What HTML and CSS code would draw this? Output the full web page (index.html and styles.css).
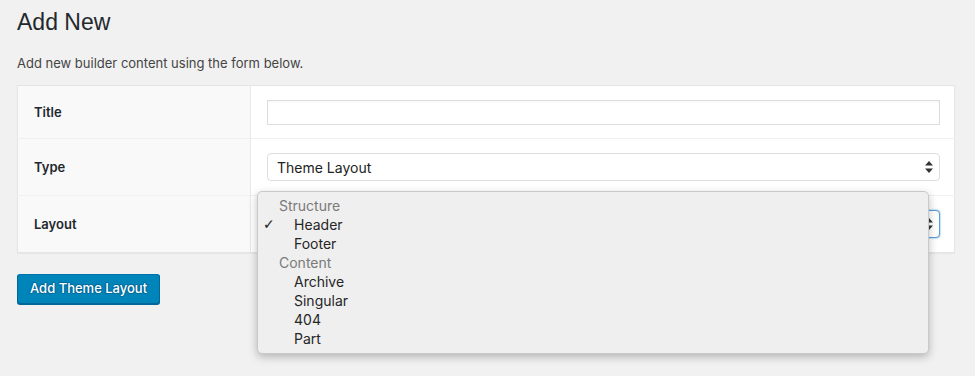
FILE: index.html
```html
<!DOCTYPE html>
<html>
<head>
<meta charset="utf-8">
<link rel="stylesheet" href="styles.css">
</head>
<body>
<div class="wrap">
  <h1 class="title">Add New</h1>
  <p class="desc">Add new builder content using the form below.</p>
  <table class="form-table">
    <tr class="row row-first">
      <th>Title</th>
      <td><div class="input"></div></td>
    </tr>
    <tr class="row">
      <th>Type</th>
      <td>
        <div class="select">
          <span>Theme Layout</span>
          <svg class="arrows" width="8" height="12" viewBox="0 0 8 12"><path d="M4 0 L8 4.5 L0 4.5 Z M0 7.5 L8 7.5 L4 12 Z" fill="#333"/></svg>
        </div>
      </td>
    </tr>
    <tr class="row">
      <th>Layout</th>
      <td>
        <div class="select-holder">
          <div class="select focus">
            <span></span>
            <svg class="arrows" width="8" height="12" viewBox="0 0 8 12"><path d="M4 0 L8 4.5 L0 4.5 Z M0 7.5 L8 7.5 L4 12 Z" fill="#333"/></svg>
          </div>
          <div class="popup">
            <div class="group">Structure</div>
            <div class="opt"><span class="check">✓</span><span>Header</span></div>
            <div class="opt"><span class="check"></span><span>Footer</span></div>
            <div class="group">Content</div>
            <div class="opt"><span class="check"></span><span>Archive</span></div>
            <div class="opt"><span class="check"></span><span>Singular</span></div>
            <div class="opt"><span class="check"></span><span>404</span></div>
            <div class="opt"><span class="check"></span><span>Part</span></div>
          </div>
        </div>
      </td>
    </tr>
  </table>
  <div class="actions">
    <button class="button-primary">Add Theme Layout</button>
  </div>
</div>
</body>
</html>
```

FILE: styles.css
```css
html, body {
  margin: 0;
  padding: 0;
  background: #f1f1f1;
  font-family: Inter, "Liberation Sans", Arial, sans-serif;
  color: #444;
}

body {
  min-height: 100vh;
}

.wrap {
  padding: 0 20px 0 17px;
}

.title {
  margin: 0;
  padding: 8px 0 0;
  font-family: "Liberation Sans", Arial, sans-serif;
  font-size: 23px;
  font-weight: 400;
  line-height: 28px;
  color: #23282d;
}

.desc {
  margin: 0;
  padding-top: 17px;
  font-size: 13px;
  line-height: 20px;
  color: #444;
}

.form-table {
  margin-top: 12px;
  width: 938px;
  border-collapse: collapse;
  background: #fff;
  border: 1px solid #e5e5e5;
  box-shadow: 0 1px 1px rgba(0, 0, 0, 0.04);
}

.row th {
  width: 233px;
  box-sizing: border-box;
  height: 57px;
  padding: 0 0 0 16px;
  text-align: left;
  vertical-align: middle;
  background: #f9f9f9;
  border-right: 1px solid #e8e8e8;
  border-top: 1px solid #f0f0f0;
  font-size: 13px;
  font-weight: 600;
  color: #23282d;
}

.row td {
  height: 57px;
  box-sizing: border-box;
  padding: 0 14px 0 16px;
  vertical-align: middle;
  border-top: 1px solid #f0f0f0;
}

.row-first th,
.row-first td {
  height: 53px;
  border-top: none;
}

.input {
  height: 25px;
  box-sizing: border-box;
  border: 1px solid #ddd;
  background: #fff;
  box-shadow: inset 0 1px 2px rgba(0, 0, 0, 0.04);
}

.select {
  height: 28px;
  box-sizing: border-box;
  border: 1px solid #ddd;
  border-radius: 4px;
  background: #fff;
  display: flex;
  align-items: center;
  justify-content: space-between;
  padding: 0 6px 0 9px;
  font-size: 14px;
  color: #222;
}

.select.focus {
  border-color: #5b9dd9;
  box-shadow: 0 0 2px rgba(30, 140, 190, 0.8);
}

.arrows {
  display: block;
}

.select-holder {
  position: relative;
}

.popup {
  position: absolute;
  left: -10px;
  top: -19px;
  width: 672px;
  box-sizing: border-box;
  padding: 4px 0 5px;
  background: #efefef;
  border: 1px solid #c9c9c9;
  border-radius: 5px;
  box-shadow: 0 3px 8px rgba(0, 0, 0, 0.25);
  font-size: 14px;
  line-height: 19px;
}

.group {
  padding-left: 21px;
  color: #7a7a7a;
}

.opt {
  display: flex;
  padding-left: 5px;
  color: #262626;
}

.check {
  width: 31px;
  flex: none;
  font-family: "DejaVu Sans", sans-serif;
  font-size: 14px;
  font-weight: 700;
  color: #222;
}

.actions {
  padding-top: 21px;
}

.button-primary {
  height: 30px;
  box-sizing: border-box;
  padding: 0 12px 2px;
  background: #0085ba;
  border: 1px solid #0073aa;
  border-color: #0073aa #006799 #006799;
  border-radius: 3px;
  box-shadow: 0 1px 0 #006799;
  color: #fff;
  font-family: Inter, "Liberation Sans", Arial, sans-serif;
  font-size: 13px;
  font-weight: 500;
  text-shadow: 0 -1px 1px #006799, 1px 0 1px #006799, 0 1px 1px #006799, -1px 0 1px #006799;
  cursor: pointer;
}
```
